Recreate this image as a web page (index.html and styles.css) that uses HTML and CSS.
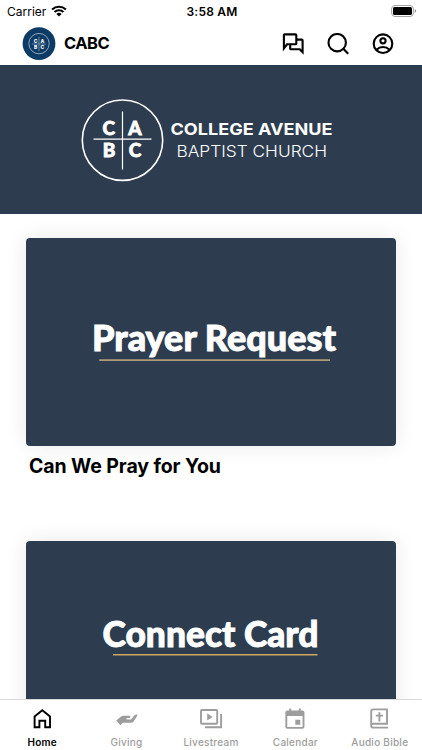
FILE: index.html
```html
<!DOCTYPE html>
<html lang="en">
<head>
    <meta charset="UTF-8">
    <meta name="viewport" content="width=device-width, initial-scale=1.0">
    <title>CABC</title>
    <link rel="stylesheet" href="styles.css">
</head>
<body>
    <div class="app">
        <div class="status-bar">
            <div class="carrier">
                <span>Carrier</span>
                <svg width="16" height="12" viewBox="0 0 16 12">
                    <path d="M1.1 4.5a10 10 0 0 1 13.8 0M3.6 7a6.4 6.4 0 0 1 8.8 0" fill="none" stroke="#000" stroke-width="2.2"/>
                    <path d="M8 11.4L5.4 8.9a3.8 3.8 0 0 1 5.2 0z"/>
                </svg>
            </div>
            <div class="time">3:58 AM</div>
            <svg class="battery" width="26" height="12" viewBox="0 0 26 12">
                <rect x=".6" y=".5" width="21.8" height="11" rx="3.4" fill="#fff" stroke="#a2a2a2"/>
                <rect x="2" y="2" width="19" height="8" rx="1.6"/>
                <path d="M23.8 4.2q1.4.6 1.4 1.8t-1.4 1.8z" fill="#888"/>
            </svg>
        </div>

        <header class="header">
            <svg class="avatar" width="34" height="34" viewBox="0 0 34 34">
                <circle cx="17" cy="16.6" r="16.4" fill="#0d3b66"/>
                <g fill="none" stroke="#c6d4e0" stroke-width=".7">
                    <circle cx="17" cy="16.6" r="10.2"/>
                    <path d="M17 9.8v14.4M9.8 17h14.4" stroke-width=".5"/>
                </g>
                <g class="avatar-text">
                    <text x="13.6" y="15.5">C</text>
                    <text x="20.4" y="15.5">A</text>
                    <text x="13.6" y="21.6">B</text>
                    <text x="20.4" y="21.6">C</text>
                </g>
            </svg>
            <div class="title">CABC</div>
            <div class="actions">
                <svg width="22" height="22" viewBox="0 0 22 22">
                    <path d="M1.9 15.4V2.2q0-.8.8-.8h10.8q.8 0 .8.8v8.3q0 .8-.8.8H5z"/>
                    <path d="M14.3 6.6h5.5q.8 0 .8.8v11.8l-2.9-2.9H9q-.8 0-.8-.8v-4"/>
                </svg>
                <svg width="22" height="22" viewBox="0 0 22 22">
                    <circle cx="10.2" cy="9.7" r="8.7"/>
                    <path d="M16.3 15.8l4.9 4.9"/>
                </svg>
                <svg width="22" height="22" viewBox="0 0 22 22">
                    <circle cx="11" cy="10.7" r="9.3"/>
                    <circle cx="11" cy="7.8" r="2.6"/>
                    <path d="M4.4 16.7q3-2.7 6.6-2.7t6.6 2.7"/>
                </svg>
            </div>
        </header>

        <main class="content">
            <svg class="banner" width="422" height="149" viewBox="0 0 422 149">
                <g fill="none" stroke="#fff">
                    <circle cx="122.5" cy="75.2" r="40.2" stroke-width="1.6"/>
                    <path d="M122.5 46.5v58M93.5 74.2h58" stroke-width="1.2"/>
                </g>
                <g class="logo-letters">
                    <text x="108.8" y="70.2">C</text>
                    <text x="135" y="70.2">A</text>
                    <text x="109" y="92.1">B</text>
                    <text x="135" y="92.1">C</text>
                </g>
                <text class="church-name" x="170.5" y="70" textLength="162" lengthAdjust="spacingAndGlyphs">COLLEGE AVENUE</text>
                <text class="church-type" x="176.5" y="91.6" textLength="150.5" lengthAdjust="spacingAndGlyphs">BAPTIST CHURCH</text>
            </svg>

            <section class="card">
                <svg class="card-image" width="370" height="208" viewBox="0 0 370 208">
                    <text x="66" y="113" textLength="244" lengthAdjust="spacingAndGlyphs">Prayer Request</text>
                    <path class="prayer-line" d="M73.3 122.2h230.7"/>
                </svg>
                <h2>Can We Pray for You</h2>
            </section>

            <section class="card">
                <svg class="card-image" width="370" height="208" viewBox="0 0 370 208">
                    <text x="76.5" y="105.5" textLength="216" lengthAdjust="spacingAndGlyphs">Connect Card</text>
                    <path class="connect-line" d="M87 113.8h204.5"/>
                </svg>
            </section>
        </main>

        <nav class="tabs">
            <a class="tab active">
                <svg width="24" height="24" viewBox="0 0 24 24">
                    <path d="M4.6 20.2V9.4L12.3 3.2 20 9.4v10.8h-4.8v-6.4H9.4v6.4z"/>
                </svg>
                <span>Home</span>
            </a>
            <a class="tab">
                <svg width="24" height="24" viewBox="0 0 24 24">
                    <path class="solid" d="M1.2 13.6l5.2-4.3q.8-.6 1.8-.6h6q1.4.1 1.2 1.3-.2 1-1.6 1h-2.2v1.4h4.4l3.4-3.8q.9-1 2.1-1.1h1l-.5 1.8-3.4 5.1q-1 1.4-2.7 1.4H7.8l-2.3 2.4z"/>
                </svg>
                <span>Giving</span>
            </a>
            <a class="tab">
                <svg width="24" height="24" viewBox="0 0 24 24">
                    <rect x="2" y="3" width="16.2" height="13.7" rx="1"/>
                    <path d="M22.1 7v13.2H6"/>
                    <path class="solid" d="M8.2 6.3v7.3l5.4-3.6z"/>
                </svg>
                <span>Livestream</span>
            </a>
            <a class="tab">
                <svg width="24" height="24" viewBox="0 0 24 24">
                    <rect x="3.3" y="4.4" width="17.2" height="16.5" rx="1.2"/>
                    <path class="solid" d="M3 4.5h18V9H3zM6.2 1.5h2v3h-2zM15.8 1.5h2v3h-2zM12.3 12.8h5v5h-5z"/>
                </svg>
                <span>Calendar</span>
            </a>
            <a class="tab">
                <svg width="24" height="24" viewBox="0 0 24 24">
                    <path d="M20 20.6H5.2q-2 0-2-2.2V4.4q0-2 2-2H19v14.4H5.2q-2 0-2 1.6M11.4 5.2v9.4M7.8 8.6H15"/>
                </svg>
                <span>Audio Bible</span>
            </a>
        </nav>
    </div>
</body>
</html>
```
FILE: styles.css
```css
body {
    margin: 0;
    background-color: #fff;
    color: #000;
    font-family: Inter, "Liberation Sans", sans-serif;
}
.app {
    display: flex;
    flex-direction: column;
    width: 422px;
    height: 750px;
    overflow: hidden;
}
svg {
    display: block;
    flex-shrink: 0;
}
.status-bar {
    display: grid;
    grid-template-columns: 1fr auto 1fr;
    align-items: center;
    height: 22px;
    flex-shrink: 0;
    padding: 0 5px 0 7px;
    box-sizing: border-box;
    font-size: 12px;
}
.carrier {
    display: flex;
    align-items: center;
    gap: 5px;
}
.time {
    font-weight: 600;
    letter-spacing: 0.2px;
}
.battery {
    justify-self: end;
    margin-top: -1px;
}
.header {
    display: flex;
    align-items: center;
    height: 43px;
    flex-shrink: 0;
    padding: 0 28px 0 22px;
    box-sizing: border-box;
}
.avatar-text {
    fill: #fff;
    font-size: 5px;
    font-weight: 800;
    text-anchor: middle;
}
.title {
    margin-left: 8px;
    margin-top: -1px;
    font-size: 16.5px;
    font-weight: 700;
    letter-spacing: -0.5px;
}
.actions {
    display: flex;
    gap: 23px;
    margin-left: auto;
}
.actions svg {
    fill: none;
    stroke: #000;
    stroke-width: 2.1;
}
.content {
    flex: 1;
    min-height: 0;
    overflow: hidden;
}
.banner {
    background-color: #2d3d4f;
    fill: #fff;
}
.logo-letters {
    font-family: Lato, sans-serif;
    font-size: 19px;
    font-weight: 900;
    text-anchor: middle;
    stroke: #fff;
    stroke-width: 0.8px;
}
.church-name {
    font-family: Inter, sans-serif;
    font-size: 16.5px;
    font-weight: 700;
}
.church-type {
    font-family: Inter, sans-serif;
    font-size: 16.5px;
    font-weight: 300;
}
.card {
    height: 303.5px;
    padding: 23.5px 26px 0;
    box-sizing: border-box;
}
.card-image {
    background-color: #2d3d4f;
    border-radius: 4px;
    box-shadow: 0 0 22px rgba(0, 0, 0, 0.09);
    fill: #fff;
    stroke: #fff;
    stroke-width: 0.9px;
    font-family: Lato, sans-serif;
    font-size: 36px;
    font-weight: 900;
}
.prayer-line {
    stroke: #ad9c77;
    stroke-width: 1.8px;
}
.connect-line {
    stroke: #cda761;
    stroke-width: 1.6px;
}
.card h2 {
    margin: 8px 0 0 3px;
    font-size: 19.5px;
    line-height: 24px;
    font-weight: 700;
    letter-spacing: -0.1px;
}
.tabs {
    display: grid;
    grid-template-columns: repeat(5, 1fr);
    height: 51px;
    flex-shrink: 0;
    box-sizing: border-box;
    border-top: 1px solid #d8d8d8;
    background-color: #fff;
    position: relative;
}
.tab {
    display: flex;
    flex-direction: column;
    align-items: center;
    padding-top: 7px;
    color: #9d9d9d;
    font-size: 10px;
    font-weight: 500;
    line-height: 12px;
    letter-spacing: 0.25px;
}
.tab svg {
    fill: none;
    stroke: currentColor;
    stroke-width: 1.9;
}
.tab .solid {
    fill: currentColor;
    stroke: none;
}
.tab span {
    margin-top: 5px;
}
.tab.active {
    color: #000;
    font-weight: 600;
}
```
